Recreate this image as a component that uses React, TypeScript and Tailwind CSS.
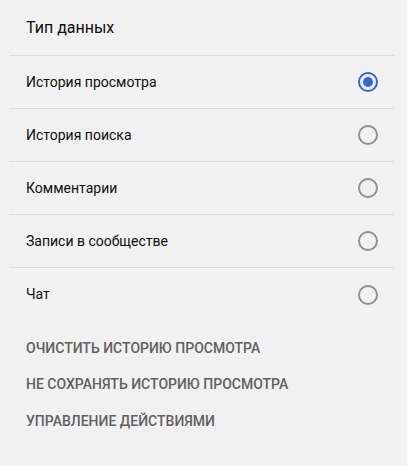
import React from "react";

const items = [
  { label: "История просмотра", selected: true },
  { label: "История поиска", selected: false },
  { label: "Комментарии", selected: false },
  { label: "Записи в сообществе", selected: false },
  { label: "Чат", selected: false },
];

const actions = [
  "ОЧИСТИТЬ ИСТОРИЮ ПРОСМОТРА",
  "НЕ СОХРАНЯТЬ ИСТОРИЮ ПРОСМОТРА",
  "УПРАВЛЕНИЕ ДЕЙСТВИЯМИ",
];

function Radio({ selected }: { selected: boolean }) {
  return selected ? (
    <div className="w-5 h-5 rounded-full border-2 border-[#3367d6] flex items-center justify-center">
      <div className="w-[10px] h-[10px] rounded-full bg-[#3367d6]" />
    </div>
  ) : (
    <div className="w-5 h-5 rounded-full border-2 border-[#909090]" />
  );
}

export default function App() {
  return (
    <div
      className="w-[407px] h-[466px] bg-[#f1f1f1] pl-[9px]"
      style={{ fontFamily: "Roboto, 'Noto Sans', sans-serif" }}
    >
      <div className="w-[385px]">
        <div className="h-[56px] flex items-center pl-[17px] text-[16px] text-[#0f0f0f] border-b border-[#d9d9d9]">
          Тип данных
        </div>
        {items.map((it, i) => (
          <div
            key={it.label}
            className={`h-[53px] flex items-center justify-between pl-[17px] pr-[16px] text-[14px] text-[#0f0f0f] ${
              i < items.length - 1 ? "border-b border-[#d9d9d9]" : ""
            }`}
          >
            <span>{it.label}</span>
            <Radio selected={it.selected} />
          </div>
        ))}
        <div className="pt-[9px] flex flex-col">
          {actions.map((a) => (
            <div
              key={a}
              className="h-[36.5px] flex items-center pl-[17px] text-[14px] font-medium text-[#606060]"
            >
              {a}
            </div>
          ))}
        </div>
      </div>
    </div>
  );
}
